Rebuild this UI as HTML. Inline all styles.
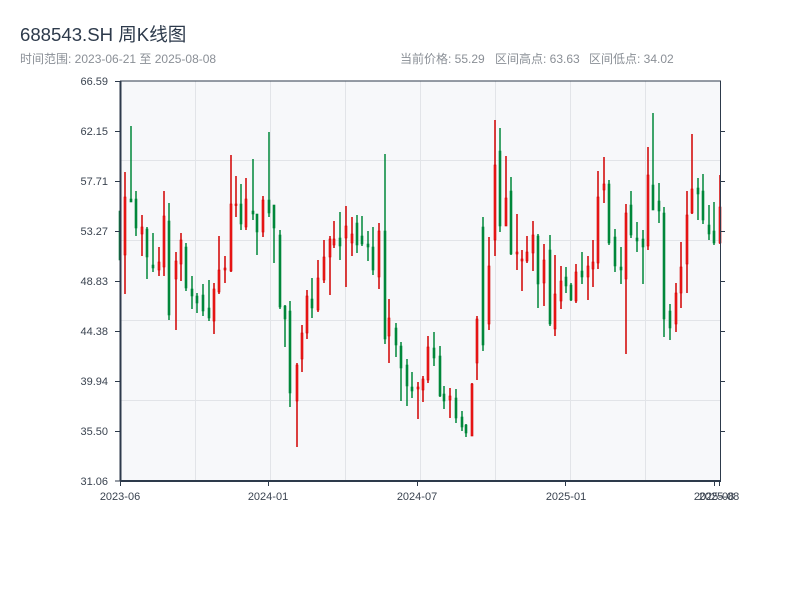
<!DOCTYPE html>
<html><head><meta charset="utf-8"><style>
body{margin:0;width:800px;height:600px;background:#fff;overflow:hidden;font-family:"Liberation Sans","Noto Sans CJK SC",sans-serif}
</style></head><body>
<svg width="800" height="600" xmlns="http://www.w3.org/2000/svg" style="position:absolute;left:0;top:0">
<text x="20" y="41" font-size="18.6" fill="#2d3a4b" font-family="Liberation Sans, Noto Sans CJK SC, sans-serif">688543.SH 周K线图</text>
<text x="20" y="63" font-size="12" fill="#8a8f96" font-family="Liberation Sans, Noto Sans CJK SC, sans-serif">时间范围: 2023-06-21 至 2025-08-08</text>
<text x="400" y="63" font-size="12" fill="#8a8f96" font-family="Liberation Sans, Noto Sans CJK SC, sans-serif">当前价格: 55.29</text>
<text x="495" y="63" font-size="12" fill="#8a8f96" font-family="Liberation Sans, Noto Sans CJK SC, sans-serif">区间高点: 63.63</text>
<text x="589" y="63" font-size="12" fill="#8a8f96" font-family="Liberation Sans, Noto Sans CJK SC, sans-serif">区间低点: 34.02</text>
<rect x="121" y="81" width="599" height="399" fill="#f7f8fa"/>
<g stroke="#e2e4e8" stroke-width="1">
<path d="M195.5 81V480M270.5 81V480M345.5 81V480M420.5 81V480M495.5 81V480M570.5 81V480M645.5 81V480"/>
<path d="M121 160.5H720M121 240.5H720M121 320.5H720M121 400.5H720"/>
</g>
<g id="c"></g>
<g stroke="#2d3a4b" fill="none">
<path d="M120.5 81V481" stroke-width="2"/>
<path d="M120 481H721" stroke-width="2"/>
<path d="M120 81H721" stroke-width="1"/>
<path d="M720.5 81V481" stroke-width="1"/>
<path d="M115 81.5H120M115 131.5H120M115 181.5H120M115 231.5H120M115 281.5H120M115 331.5H120M115 381.5H120M115 431.5H120M115 481H120"/>
<path d="M720 131.5H725M720 181.5H725M720 231.5H725M720 281.5H725M720 331.5H725M720 381.5H725M720 431.5H725"/>
<path d="M120.5 481V486M268.5 481V486M417.5 481V486M565.5 481V486M714.5 481V486M719.5 481V486"/>
</g>
<g font-size="11" fill="#3a4350" text-anchor="end" font-family="Liberation Sans, sans-serif">
<text x="108" y="85">66.59</text><text x="108" y="135">62.15</text><text x="108" y="185">57.71</text><text x="108" y="235">53.27</text><text x="108" y="285">48.83</text><text x="108" y="335">44.38</text><text x="108" y="385">39.94</text><text x="108" y="435">35.50</text><text x="108" y="485">31.06</text>
</g>
<g font-size="11" fill="#3a4350" text-anchor="middle" font-family="Liberation Sans, sans-serif">
<text x="120" y="500">2023-06</text><text x="268" y="500">2024-01</text><text x="417" y="500">2024-07</text><text x="566" y="500">2025-01</text><text x="714" y="500">2025-08</text><text x="719" y="500">2025-08</text>
</g>
</svg>
<script>
var d=[[120,211,260,211,260,'g'],[125,172,294,197,255,'r'],[131,126,202,199,202,'g'],[136,191,236,199,228,'g'],[142,215,256,227,234,'r'],[147,227,279,229,257,'g'],[153,233,272,265,268,'g'],[159,247,276,262,270,'r'],[164,191,276,216,267,'r'],[169,203,320,221,315,'g'],[176,252,330,261,279,'r'],[181,233,281,240,264,'r'],[186,243,291,247,288,'g'],[192,276,309,289,296,'g'],[197,293,313,296,303,'g'],[203,284,316,295,311,'g'],[209,280,321,308,318,'g'],[214,283,334,289,321,'r'],[219,236,294,270,292,'r'],[225,256,283,268,270,'r'],[231,155,272,204,271,'r'],[236,176,217,204,205,'r'],[241,184,230,204,224,'g'],[246,178,230,199,227,'r'],[253,159,220,211,214,'g'],[257,214,255,214,232,'g'],[263,196,237,200,232,'r'],[269,132,217,200,213,'g'],[274,205,263,205,228,'g'],[280,230,309,235,307,'g'],[285,305,347,306,319,'g'],[290,301,407,311,393,'g'],[297,363,447,365,401,'r'],[302,325,372,333,359,'r'],[307,290,339,296,333,'r'],[312,278,318,299,308,'g'],[318,260,312,278,310,'r'],[324,240,283,257,280,'r'],[330,236,295,239,257,'r'],[334,221,248,239,245,'r'],[340,212,260,238,246,'g'],[346,206,287,226,238,'r'],[352,217,256,234,243,'r'],[357,215,253,223,245,'g'],[362,216,246,236,244,'g'],[368,231,261,244,247,'g'],[373,227,275,247,270,'g'],[379,223,289,231,277,'r'],[385,154,344,231,339,'g'],[389,299,363,318,336,'r'],[396,323,357,328,345,'g'],[401,342,401,346,368,'g'],[407,359,406,365,386,'g'],[412,372,398,387,391,'g'],[418,382,419,387,389,'r'],[423,376,402,379,390,'r'],[428,336,383,347,380,'r'],[434,332,366,348,358,'g'],[440,346,397,356,396,'g'],[444,386,409,394,401,'g'],[450,388,418,396,400,'r'],[456,389,423,398,418,'g'],[462,411,431,417,427,'g'],[466,424,437,425,433,'g'],[472,383,436,384,436,'r'],[477,316,380,319,363,'r'],[483,217,351,227,345,'g'],[489,237,330,266,324,'r'],[495,120,256,165,240,'r'],[500,128,232,151,226,'g'],[506,156,226,198,226,'r'],[511,177,255,191,254,'g'],[517,214,270,252,254,'r'],[522,250,291,259,261,'r'],[527,236,263,252,261,'r'],[533,221,271,235,253,'r'],[538,234,308,236,284,'g'],[544,244,306,260,283,'r'],[550,235,326,250,324,'g'],[555,255,336,294,329,'r'],[561,266,309,281,301,'r'],[566,267,293,277,286,'g'],[571,283,301,285,300,'g'],[576,264,303,272,301,'r'],[582,252,284,271,277,'g'],[588,256,300,266,277,'r'],[593,240,287,262,269,'r'],[598,171,269,197,263,'r'],[604,157,203,184,190,'r'],[609,180,245,184,243,'g'],[615,229,272,237,266,'g'],[621,247,284,267,270,'g'],[626,204,354,213,279,'r'],[631,191,238,205,235,'g'],[637,222,252,238,241,'g'],[643,230,284,239,247,'g'],[648,147,250,175,246,'r'],[653,113,210,185,210,'g'],[659,183,223,201,211,'g'],[664,207,337,213,319,'g'],[670,304,340,311,328,'g'],[676,283,332,293,324,'r'],[681,242,308,267,293,'r'],[687,191,293,215,264,'r'],[692,134,214,189,213,'r'],[698,178,220,188,194,'g'],[703,174,224,191,220,'g'],[709,205,240,225,234,'g'],[714,202,245,231,243,'g'],[720,175,244,207,243,'r']];
var s='';d.forEach(function(c){var x=c[0],col=c[5]=='r'?'#d20000':'#00873a',fill=c[5]=='r'?'#ee1c1c':'#00873a';
s+='<rect x="'+(x-0.75)+'" y="'+c[1]+'" width="1.5" height="'+(c[2]-c[1])+'" fill="'+col+'"/>';
var h=Math.max(1.5,c[4]-c[3]);s+='<rect x="'+(x-1)+'" y="'+c[3]+'" width="2" height="'+h+'" fill="'+fill+'" stroke="'+col+'" stroke-width="0.6"/>';});
document.getElementById('c').innerHTML=s;
</script>
</body></html>
